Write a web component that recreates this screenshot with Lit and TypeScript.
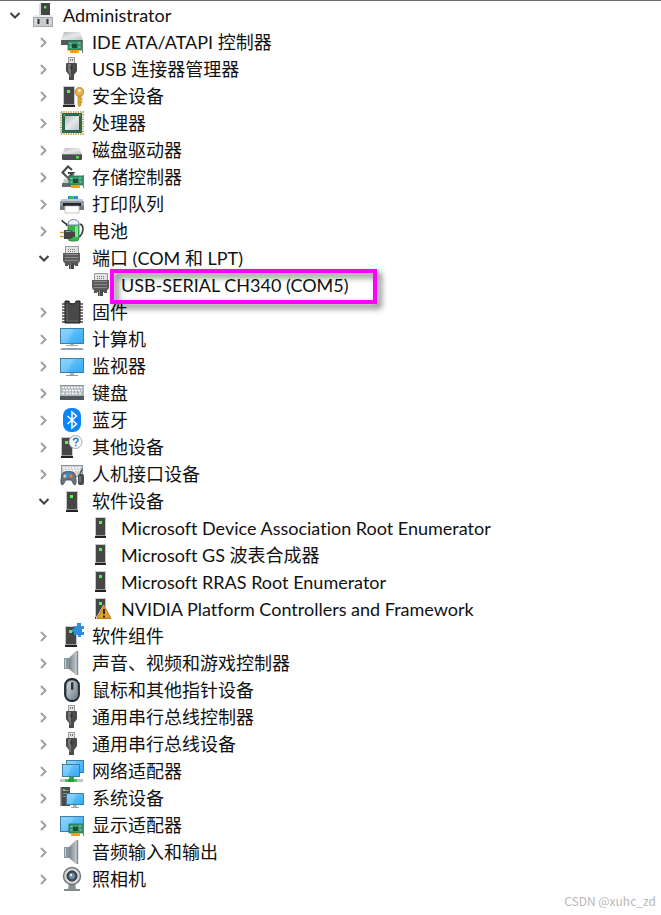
import { LitElement, html, svg, css, nothing, SVGTemplateResult, TemplateResult } from "lit";
import { customElement, property, state } from "lit/decorators.js";

interface DeviceNode {
  label: string;
  icon: string;
  open?: boolean;
  marked?: boolean;
  children?: DeviceNode[];
}

/* Shared icon parts */

const tower = (x: number, y: number, w = 11) => svg`
  <rect x=${x - 1} y=${y} width=${w} height="19" fill="#c6cacd"/>
  <rect x=${x} y=${y + 1} width=${w - 2} height="17" fill="#464646"/>
  <rect x=${x} y=${y + 18} width=${w - 2} height="1" fill="#9a9a9a"/>
  <rect x=${x - 1} y=${y + 19} width=${w} height="2" fill="#222"/>
  <rect x=${x + 3} y=${y + 4} width="3" height="3" fill="#4dfb49"/>`;

const screen = (x: number, y: number, w: number, h: number) => svg`
  <rect x=${x + 0.5} y=${y + 0.5} width=${w - 1} height=${h - 1} fill="url(#glass)" stroke="#3f7fa3"/>
  <path d="M${x + 1} ${y + 1}h${w * 0.55}l${-w * 0.3} ${h - 2}h${-w * 0.25}z" fill="#fff" opacity=".16"/>`;

const card = (x: number, y: number) => svg`
  <rect x=${x} y=${y} width="14" height="9" fill="#37966c" stroke="#246e4e" stroke-width=".8"/>
  <rect x=${x + 4} y=${y + 3} width="5" height="4" fill="#1b4a36"/>
  <path d="M${x + 1.5} ${y + 2.5}h2M${x + 1.5} ${y + 6}h2M${x + 10} ${y + 2}h2.5M${x + 10.5} ${y + 6}h2" stroke="#8fdcb0"/>
  <rect x=${x + 2} y=${y + 9} width="9" height="3" fill="#f5a81c"/>
  <path d="M${x + 4.5} ${y + 9}v3M${x + 7.5} ${y + 9}v3" stroke="#d98a12" stroke-width=".8"/>
  <path d="M${x + 14.5} ${y - 1}v13" stroke="#777"/>`;

const icons: Record<string, SVGTemplateResult> = {
  root: svg`
    <path d="M8 2l2-1v12H8z" fill="#d5d8da"/>
    <rect x="10" y="1" width="9" height="13" fill="#444"/>
    <rect x="13" y="4" width="2.4" height="2.4" fill="#47ee43"/>
    <path d="M4 13h16l2 2H2z" fill="#e8eaeb"/>
    <path d="M2 15h20v10H2z" fill="#c9cccf"/>
    <path d="M2.5 15.500h19v9h-19z" fill="none" stroke="#a6a9ac"/>
    <path d="M5 17v5M19 17v5" stroke="#eee"/>
    <path d="M7.500 17v5M16.500 17v5" stroke="#333" stroke-width="2"/>`,
  ide: svg`
    <path d="M4 3h16l3 8H1z" fill="url(#steel)"/>
    <path d="M1 11h22v5H1z" fill="#55595c"/>
    ${card(8, 12)}`,
  usb: svg`
    <rect x="8.500" y="1.500" width="6" height="7" fill="#e4e4e4" stroke="#9c9c9c"/>
    <path d="M10.500 3v2M12.500 3v2" stroke="#777"/>
    <path d="M6 8q0-1 1-1h9q1 0 1 1v7l-3 4v5H9v-5l-3-4z" fill="#4b4b4b"/>
    <path d="M8 8h3v13H9.500v-3L8 15z" fill="#767676"/>
    <path d="M11.500 9v5M10 11l1.500 2 1.500-2" stroke="#333" fill="none"/>`,
  security: svg`
    ${tower(4, 3, 12)}
    <circle cx="19.500" cy="9" r="4.500" fill="#e8b24c" stroke="#b57f22" stroke-width=".8"/>
    <circle cx="19.500" cy="7.500" r="1.300" fill="#fff"/>
    <path d="M18 13h3v9l-1.500 2-1.500-2z" fill="#e2a63a" stroke="#b57f22" stroke-width=".6"/>
    <path d="M21 16h1.500M21 19h1.500" stroke="#c58d2c" stroke-width="1.500"/>`,
  cpu: svg`
    <rect x="1" y="2" width="22" height="22" fill="none" stroke="#c4a251" stroke-width="2" stroke-dasharray="1.200 1.200"/>
    <rect x="2" y="3" width="20" height="20" fill="#2c6a52"/>
    <rect x="4.500" y="5.500" width="15" height="15" fill="#285c48"/>
    <rect x="5" y="6" width="14" height="14" fill="url(#steel)"/>
    <path d="M3.500 4.500h1.500v1.500H3.500zM19 4.500h1.500v1.500H19z" fill="#6da48e"/>`,
  disk: svg`
    <path d="M5 11h14l3 6H2z" fill="url(#steel)"/>
    <rect x="2" y="17" width="20" height="6" rx="1" fill="#4b4e51"/>
    <path d="M3 17.500h18" stroke="#7b7f82"/>
    <rect x="16" y="19" width="3" height="2.500" fill="#46e443"/>`,
  storage: svg`
    <path d="M4 15h8l4 7H2z" fill="#c7cacc"/><path d="M2 19h12v4H2z" fill="#66696c"/>
    <path d="M12 6L8 2.500 2.500 8.500 8 14l5-5H8" fill="none" stroke="#454545" stroke-width="2"/>
    <path d="M6 11l3 5 5-6" fill="none" stroke="#777" stroke-width="1.300"/>
    ${card(9, 12)}`,
  printer: svg`
    <rect x="8" y="5" width="10" height="5" fill="#1c93e8"/><rect x="10" y="5" width="4" height="4" fill="#35c24b"/>
    <path d="M2 8h20l2 3v8H0v-8z" fill="#8f989f"/>
    <path d="M2 8h20l1 2H1z" fill="#c3c9cd"/>
    <rect x="3" y="12" width="18" height="3" fill="#202428"/>
    <path d="M0 15h4v4H0zM20 15h4v4h-4z" fill="#6d7880"/>
    <path d="M5 15h14v7H5z" fill="#fff" stroke="#aaa" stroke-width=".7"/>`,
  battery: svg`
    <path d="M2 2c1 4 5 2 5 6" fill="none" stroke="#333" stroke-width="1.600"/>
    <path d="M20 6c5 2 3 10-1 13" fill="none" stroke="#3c4043" stroke-width="1.600"/>
    <rect x="8" y="3" width="11" height="20" rx="3" fill="#35b548" stroke="#30803a" stroke-width=".8"/>
    <path d="M8 6c0-6 11-6 11 0v1H8z" fill="#edf1fa" stroke="#7983a0"/>
    <path d="M15 8h3v11h-3z" fill="#84e58e"/>
    <path d="M0 14.500h5M0 18.500h5" stroke="#d5a137" stroke-width="1.500"/>
    <path d="M4 12h5c2 0 3 1 4 2h2v5h-2c-1 1-2 2-4 2H4z" fill="#434343"/>
    <path d="M5.500 13.500h5" stroke="#999"/>`,
  port: svg`
    <path d="M5.500 1.500h13v8h-13z" fill="#e3e3e3" stroke="#999"/>
    <path d="M8 4.500h8M8 6.500h8" stroke="#777" stroke-dasharray="1 1"/>
    <path d="M3 8h17v8l-3 4H6l-3-4z" fill="#5c5c5c"/>
    <path d="M5 9.500h13M5 12.500h13M5 15.500h13" stroke="#8a8a8a"/>
    <path d="M5 17h3v4H5zM15 17h3v4h-3z" fill="#555"/>
    <path d="M9 18h5v6H9z" fill="#484848"/><path d="M10.500 18v6" stroke="#888"/>`,
  firmware: svg`
    <path d="M2 5h21M2 8h21M2 11h21M2 14h21M2 17h21M2 20h21M2 23h21" stroke="#4a4a4a" stroke-width="1.600"/>
    <path d="M5 2h4c0 4 7 4 7 0h4v22H5z" fill="#484848" stroke="#1e1e1e"/>
    <path d="M7 5v17h11" fill="none" stroke="#656565"/>`,
  computer: svg`
    ${screen(0, 2, 24, 16)}
    <path d="M10 18h4v2h-4z" fill="#a9b3ba"/><path d="M6 19.500h12" stroke="#9ca9b1"/>
    <path d="M2 22h20l2 2H0z" fill="#8ea4b1"/>`,
  monitor: svg`
    ${screen(0, 5, 24, 15)}
    <path d="M10 20h4v2h-4z" fill="#a9b3ba"/><path d="M6 22.500h12" stroke="#8b98a0"/>`,
  keyboard: svg`
    <rect x="0" y="5" width="24" height="12" fill="#b2b9bd"/>
    <path d="M2 7.500h20M3 10.500h19M2 13.500h3M6 13.500h12M19 13.500h3" stroke="#fff" stroke-width="1.600" stroke-dasharray="2 1"/>
    <path d="M0 5.500h24" stroke="#8a9196"/>
    <rect x="0" y="16" width="24" height="4" fill="#50575c"/>`,
  bluetooth: svg`
    <rect x="3" y="1" width="18" height="24" rx="8" fill="#0a84fb"/>
    <path d="M7.500 9l9 8-4.500 4V5l4.500 4-9 8" fill="none" stroke="#fff" stroke-width="1.500"/>`,
  other: svg`
    ${tower(2, 3, 12)}
    <circle cx="15.500" cy="8" r="6.500" fill="#f7f9fa" stroke="#a7aaac"/>
    <path d="M13.500 6.500c0-3 4.500-3 4.500-.5 0 1.800-2.300 1.800-2.300 3.500M15.700 10.700v1.600" fill="none" stroke="#287fc5" stroke-width="1.600"/>`,
  hid: svg`
    <rect x="1.500" y="4.500" width="21" height="11" fill="#cbd1d5" stroke="#8f989e"/>
    <path d="M3 7h18M4 9.500h17" stroke="#fff" stroke-width="1.600" stroke-dasharray="2 1"/>
    <path d="M3 12c2-2 9-2 11 0 2 2 3 11 1 12-2 0-3-5-4-5H6c-1 0-2 5-4 5-2-1-1-10 1-12z" fill="#68757e" stroke="#3a444b" stroke-width=".8"/>
    <circle cx="5" cy="15" r="1.700" fill="#c4ccd1"/><circle cx="7.500" cy="13.500" r="2" fill="#2790df"/>
    <circle cx="11" cy="15" r="1.500" fill="#f48331"/>
    <path d="M20 13l2-5" stroke="#4d575e" stroke-width="1.500"/>
    <rect x="18" y="13" width="6" height="11" rx="2" fill="#444c52"/><path d="M20 15v6" stroke="#929ba1"/>`,
  software: tower(7, 3, 12),
  driver: tower(7, 2),
  warning: svg`
    ${tower(7, 2)}
    <path d="M14.500 8.500L22.500 23H6.500z" fill="#fff"/>
    <path d="M15 9.500l7 13H8z" fill="#e4a024" stroke="#b67a12" stroke-linejoin="round"/>
    <path d="M15 13v5M15 19.500v2" stroke="#2d2107" stroke-width="2"/>`,
  component: svg`
    ${tower(6, 3, 12)}
    <path d="M14 3h3V0h4v3h3v3h-2v3h2v3h-3v2h-3v-2h-4V9h-2V6h2z" fill="#2f8fd6"/>`,
  speaker: svg`
    <path d="M4 8h5v11H4z" fill="#8a969e"/><path d="M5.500 9v9" stroke="#c6ced3"/>
    <path d="M9 8l7-7h2v24h-2l-7-6z" fill="url(#cone)"/>
    <path d="M17.500 1v24" stroke="#858f96" stroke-width="1.500"/>`,
  mouse: svg`
    <rect x="5" y="2" width="14" height="22" rx="6.500" fill="#77848d" stroke="#20262a" stroke-width="1.800"/>
    <rect x="7" y="4" width="10" height="18" rx="4.500" fill="url(#mouseback)"/>
    <rect x="11" y="5" width="2.400" height="8" rx="1.200" fill="#2c3338"/>`,
  network: svg`
    ${screen(6, 2, 18, 13)}${screen(2, 6, 18, 13)}
    <path d="M9 19h5v2H9z" fill="#35a547"/>
    <path d="M0 22.500h23" stroke="#c1c5c7" stroke-width="3"/>
    <path d="M5 22.500h12" stroke="#4fc65a" stroke-width="3"/><path d="M8 22.500h6" stroke="#2c9a3c" stroke-width="3"/>`,
  system: svg`
    <rect x="0" y="2" width="10" height="19" fill="#4b4b4b"/><rect x="0" y="2" width="1.500" height="19" fill="#a0a0a0"/>
    <path d="M3 5.500h6M3 8.500h6M3 11.500h3" stroke="#8f8f8f"/><rect x="3" y="4" width="2" height="2" fill="#4df04a"/>
    ${screen(6, 8, 18, 12)}
    <path d="M13 20h4v2h-4z" fill="#a9b3ba"/><path d="M11 22.500h8" stroke="#9ca9b1"/>`,
  display: svg`${screen(0, 4, 24, 16)}${card(9, 12)}`,
  camera: svg`
    <path d="M9 18h6l1 5H8z" fill="#888f94"/>
    <path d="M4 24h16" stroke="#5f666a" stroke-width="1.500"/>
    <circle cx="12" cy="10" r="8.500" fill="#d3d7d9" stroke="#73797d" stroke-width="1.500"/>
    <circle cx="12" cy="10" r="5" fill="#454c52" stroke="#2a2f33"/>
    <circle cx="12" cy="10" r="3" fill="#6b91b5"/><circle cx="11" cy="9" r="1.200" fill="#dfeffc"/>`,
};

@customElement("device-icon")
class DeviceIcon extends LitElement {
  @property() name = "";

  static styles = css`
    :host { display: block; flex: none; }
    .art { display: block; width: 24px; height: 27px; }
  `;

  render() {
    return html`
      <svg class="art" viewBox="0 0 24 27" aria-hidden="true">
        <defs>
          <linearGradient id="glass" x1="0" y1="0" x2="1" y2="1">
            <stop offset="0" stop-color="#7ccffb"/><stop offset="1" stop-color="#2fa8f6"/>
          </linearGradient>
          <linearGradient id="steel" x1="0" y1="0" x2="1" y2="1">
            <stop offset="0" stop-color="#b4b8bb"/><stop offset=".5" stop-color="#e6e8e9"/><stop offset="1" stop-color="#bfc3c6"/>
          </linearGradient>
          <linearGradient id="cone">
            <stop offset="0" stop-color="#76828a"/><stop offset="1" stop-color="#d1d8dc"/>
          </linearGradient>
          <linearGradient id="mouseback" x1="0" y1="0" x2="1" y2="1">
            <stop offset="0" stop-color="#d1d9df"/><stop offset="1" stop-color="#71808b"/>
          </linearGradient>
        </defs>
        ${icons[this.name] ?? nothing}
      </svg>`;
  }
}

const group = (icon: string, label: string): DeviceNode => ({ icon, label, children: [] });

@customElement("app-root")
class AppRoot extends LitElement {
  @state() private tree: DeviceNode = {
    label: "Administrator",
    icon: "root",
    open: true,
    children: [
      group("ide", "IDE ATA/ATAPI 控制器"),
      group("usb", "USB 连接器管理器"),
      group("security", "安全设备"),
      group("cpu", "处理器"),
      group("disk", "磁盘驱动器"),
      group("storage", "存储控制器"),
      group("printer", "打印队列"),
      group("battery", "电池"),
      {
        label: "端口 (COM 和 LPT)",
        icon: "port",
        open: true,
        children: [{ label: "USB-SERIAL CH340 (COM5)", icon: "port", marked: true }],
      },
      group("firmware", "固件"),
      group("computer", "计算机"),
      group("monitor", "监视器"),
      group("keyboard", "键盘"),
      group("bluetooth", "蓝牙"),
      group("other", "其他设备"),
      group("hid", "人机接口设备"),
      {
        label: "软件设备",
        icon: "software",
        open: true,
        children: [
          { label: "Microsoft Device Association Root Enumerator", icon: "driver" },
          { label: "Microsoft GS 波表合成器", icon: "driver" },
          { label: "Microsoft RRAS Root Enumerator", icon: "driver" },
          { label: "NVIDIA Platform Controllers and Framework", icon: "warning" },
        ],
      },
      group("component", "软件组件"),
      group("speaker", "声音、视频和游戏控制器"),
      group("mouse", "鼠标和其他指针设备"),
      group("usb", "通用串行总线控制器"),
      group("usb", "通用串行总线设备"),
      group("network", "网络适配器"),
      group("system", "系统设备"),
      group("display", "显示适配器"),
      group("speaker", "音频输入和输出"),
      group("camera", "照相机"),
    ],
  };

  static styles = css`
    :host {
      display: block;
      min-height: 100vh;
      box-sizing: border-box;
      padding-top: 1px;
      border-top: 1px solid #6b6b6b;
      background: #fff;
      color: #111;
      font-family: Lato, "Noto Sans CJK SC", sans-serif;
      font-size: 18px;
      font-variant-ligatures: none;
      line-height: 27px;
    }
    .tree, .branch { list-style: none; margin: 0; padding: 0; }
    .tree { padding-left: 3px; }
    .branch { padding-left: 29px; }
    .row { display: flex; height: 27px; white-space: nowrap; }
    .toggle, .spacer { flex: none; width: 24px; margin-right: 4px; }
    .toggle {
      display: grid;
      place-items: center;
      height: 27px;
      padding: 0;
      border: 0;
      background: none;
      color: #a0a0a0;
    }
    .toggle.open { color: #404040; }
    .chevron { display: block; width: 12px; height: 11px; fill: none; stroke: currentColor; stroke-width: 2; }
    .label { position: relative; margin-left: 8px; }
    .marked::after {
      content: "";
      position: absolute;
      z-index: 1;
      inset: -3px -28px -5px -11px;
      border: 4px solid #f0f;
      filter: drop-shadow(4px 4px 3px rgba(0, 0, 0, 0.6));
      pointer-events: none;
    }
    .credit {
      padding-right: 5px;
      text-align: right;
      color: #b8b8b8;
      font: 12px/16px "Noto Sans CJK SC", sans-serif;
    }
  `;

  private toggle(node: DeviceNode) {
    node.open = !node.open;
    this.requestUpdate();
  }

  private renderNode(node: DeviceNode): TemplateResult {
    return html`
      <li role="treeitem" aria-expanded=${node.children ? String(!!node.open) : nothing}>
        <div class="row">
          ${node.children
            ? html`<button
                class="toggle ${node.open ? "open" : ""}"
                aria-label=${node.label}
                @click=${() => this.toggle(node)}
              >
                <svg class="chevron" viewBox="0 0 12 11">
                  <path d=${node.open ? "M1.500 3L6 7.500 10.500 3" : "M3 1l4.500 4.500L3 10"} />
                </svg>
              </button>`
            : html`<span class="spacer"></span>`}
          <device-icon name=${node.icon}></device-icon>
          <span class="label ${node.marked ? "marked" : ""}">${node.label}</span>
        </div>
        ${node.open && node.children?.length
          ? html`<ul class="branch" role="group">${node.children.map((child) => this.renderNode(child))}</ul>`
          : nothing}
      </li>`;
  }

  render() {
    return html`
      <ul class="tree" role="tree">${this.renderNode(this.tree)}</ul>
      <footer class="credit">CSDN @xuhc_zd</footer>`;
  }
}
